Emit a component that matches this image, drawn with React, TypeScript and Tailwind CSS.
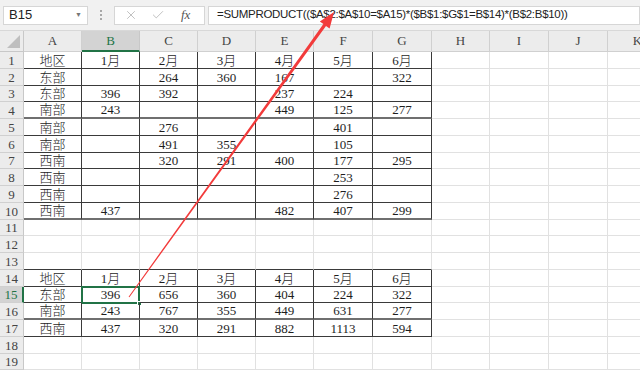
import { X, Check } from "lucide-react";

type Col = { name: string; w: string };

const cols: Col[] = [
  { name: "A", w: "w-[58px]" },
  { name: "B", w: "w-[58px]" },
  { name: "C", w: "w-[58px]" },
  { name: "D", w: "w-[58px]" },
  { name: "E", w: "w-[58px]" },
  { name: "F", w: "w-[59px]" },
  { name: "G", w: "w-[59px]" },
  { name: "H", w: "w-[58px]" },
  { name: "I", w: "w-[59px]" },
  { name: "J", w: "w-[59px]" },
  { name: "K", w: "w-[60px]" },
];

const heights = [17, 17, 16, 17, 17, 17, 16, 17, 17, 17, 16, 17, 17, 17, 16, 17, 17, 17, 16];

const data: Record<number, string[]> = {
  1: ["地区", "1月", "2月", "3月", "4月", "5月", "6月"],
  2: ["东部", "", "264", "360", "167", "", "322"],
  3: ["东部", "396", "392", "", "237", "224", ""],
  4: ["南部", "243", "", "", "449", "125", "277"],
  5: ["南部", "", "276", "", "", "401", ""],
  6: ["南部", "", "491", "355", "", "105", ""],
  7: ["西南", "", "320", "291", "400", "177", "295"],
  8: ["西南", "", "", "", "", "253", ""],
  9: ["西南", "", "", "", "", "276", ""],
  10: ["西南", "437", "", "", "482", "407", "299"],
  14: ["地区", "1月", "2月", "3月", "4月", "5月", "6月"],
  15: ["东部", "396", "656", "360", "404", "224", "322"],
  16: ["南部", "243", "767", "355", "449", "631", "277"],
  17: ["西南", "437", "320", "291", "882", "1113", "594"],
};

const inTable = (r: number) => (r >= 1 && r <= 10) || (r >= 14 && r <= 17);
const thickRow = (r: number) => r === 4 || r === 10 || r === 16;

const serif = "font-['Liberation_Serif','Noto_Sans_CJK_SC',serif]";

function Cell({ r, c, w }: { r: number; c: number; w: string }) {
  const table = inTable(r) && c <= 6;
  const aboveTable = r === 13 && c <= 6;
  const text = data[r]?.[c] ?? "";
  let bottom = "border-b border-b-[#e1e1e1]";
  if (table || aboveTable) bottom = thickRow(r) ? "border-b-2 border-b-[#6f6f6f]" : "border-b border-b-[#3a3a3a]";
  const right = table ? "border-r border-r-[#3a3a3a]" : "border-r border-r-[#e1e1e1]";
  const selected = r === 15 && c === 1;
  return (
    <div className={`${w} shrink-0 h-full box-border ${bottom} ${right} relative flex items-end justify-center`}>
      <span className={`text-[13px] leading-[15px] font-light text-[#1e1e1e] ${serif}`}>{text}</span>
      {selected && (
        <div className="absolute -left-px -top-px w-[59px] h-[18px] border-2 border-[#217346]">
          <div className="absolute -right-[4px] -bottom-[4px] w-[5px] h-[5px] bg-[#217346] border border-white" />
        </div>
      )}
    </div>
  );
}

export default function App() {
  return (
    <div className="w-[640px] h-[370px] overflow-hidden relative bg-white">
      {/* formula bar */}
      <div className="h-[31px] bg-[#f1f1f1] flex items-center pl-[3px] border-b border-[#d8d8d8]">
        <div className="w-[85px] h-[19px] bg-white border border-[#d6d6d6] flex items-center justify-between px-[5px] font-['Liberation_Sans',sans-serif] text-[13px] text-[#222]">
          <span>B15</span>
          <span className="text-[7px] text-[#777]">▼</span>
        </div>
        <div className="w-[26px] flex flex-col items-center gap-[2px]">
          <span className="w-[2px] h-[2px] bg-[#a8a8a8]" />
          <span className="w-[2px] h-[2px] bg-[#a8a8a8]" />
          <span className="w-[2px] h-[2px] bg-[#a8a8a8]" />
        </div>
        <div className="w-[91px] h-[19px] bg-white border border-[#d6d6d6] flex items-center pl-[9px] gap-[13px]">
          <X size={14} strokeWidth={1.2} className="text-[#a6a6a6]" />
          <Check size={14} strokeWidth={1.2} className="text-[#a6a6a6]" />
          <span className="italic text-[13px] text-[#555] font-['Liberation_Serif',serif] ml-[3px]">fx</span>
        </div>
        <div className="ml-[3px] flex-1 h-[19px] bg-white border border-[#d6d6d6] flex items-center pl-[8px] font-['Liberation_Sans',sans-serif] text-[11.5px] tracking-[-0.3px] text-[#222] whitespace-nowrap">
          =SUMPRODUCT(($A$2:$A$10=$A15)*($B$1:$G$1=B$14)*(B$2:B$10))
        </div>
      </div>

      {/* column headers */}
      <div className={`flex h-[21px] bg-[#ececec] ${serif} text-[13px] text-[#444]`}>
        <div className="w-[24px] shrink-0 h-full border-r border-b border-[#c8c8c8] relative">
          <div className="absolute right-[3px] bottom-[3px] w-0 h-0 border-l-[13px] border-l-transparent border-b-[13px] border-b-[#bfbfbf]" />
        </div>
        {cols.map((c) =>
          c.name === "B" ? (
            <div key={c.name} className={`${c.w} shrink-0 h-full bg-[#d3d3d3] border-r border-[#c8c8c8] border-b-2 border-b-[#217346] flex items-center justify-center text-[#217346]`}>
              {c.name}
            </div>
          ) : (
            <div key={c.name} className={`${c.w} shrink-0 h-full border-r border-b border-[#d0d0d0] flex items-center justify-center`}>
              {c.name}
            </div>
          )
        )}
      </div>

      {/* rows */}
      {heights.map((h, i) => {
        const r = i + 1;
        const sel = r === 15;
        return (
          <div key={r} className={`flex ${h === 17 ? "h-[17px]" : "h-[16px]"}`}>
            <div
              className={`w-[24px] shrink-0 h-full border-b border-[#d0d0d0] flex items-end justify-center ${serif} text-[13px] leading-[15px] ${
                sel ? "bg-[#d3d3d3] text-[#217346] border-r-2 border-r-[#217346]" : "bg-[#ececec] text-[#444] border-r border-r-[#c8c8c8]"
              }`}
            >
              {r}
            </div>
            {cols.map((c, ci) => (
              <Cell key={c.name} r={r} c={ci} w={c.w} />
            ))}
          </div>
        );
      })}

      {/* red arrow */}
      <svg className="absolute inset-0 pointer-events-none" width="640" height="370" viewBox="0 0 640 370">
        <polygon
          points="129.4,297.3 326,25.9 329.6,28.5 334,12 319.8,21.5 323.4,24.1 128.6,296.7"
          fill="#f23b3b"
        />
      </svg>
    </div>
  );
}
